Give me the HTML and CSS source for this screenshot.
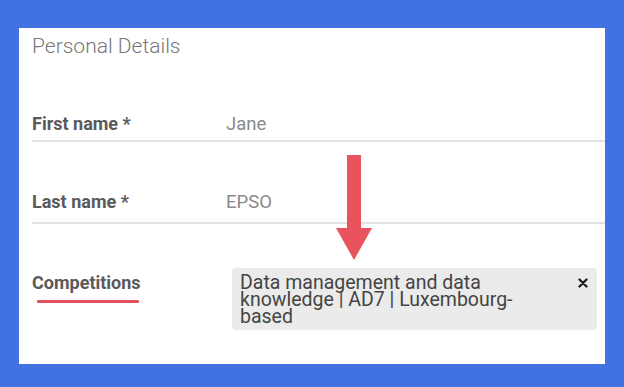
FILE: index.html
```html
<!DOCTYPE html>
<html lang="en">
<head>
<meta charset="utf-8">
<title>Personal Details</title>
<link rel="stylesheet" href="styles.css">
</head>
<body>
<main class="card">
  <h2 class="title">Personal Details</h2>
  <div class="row row-first">
    <div class="label">First name *</div>
    <div class="value">Jane</div>
  </div>
  <div class="row row-last">
    <div class="label">Last name *</div>
    <div class="value">EPSO</div>
  </div>
  <div class="row row-comp">
    <div class="label label-comp">
      <span>Competitions</span>
      <span class="underline"></span>
    </div>
    <div class="tag">
      <span class="tag-text">Data management and data knowledge | AD7 | Luxembourg-based</span>
      <svg class="tag-close" width="10" height="10" viewBox="0 0 10 10" aria-label="remove">
        <path d="M1.5 1.5 L8.5 8.5 M8.5 1.5 L1.5 8.5" stroke="#222" stroke-width="2.4" stroke-linecap="round"/>
      </svg>
    </div>
  </div>
  <svg class="arrow" width="36" height="105" viewBox="0 0 36 105">
    <polygon points="11,0 25,0 25,73 36,73 18,105 0,73 11,73" fill="#e9535d"/>
  </svg>
</main>
</body>
</html>
```

FILE: styles.css
```css
html, body {
  margin: 0;
  padding: 0;
}
body {
  background: #4272e2;
  width: 624px;
  height: 387px;
  overflow: hidden;
  padding-top: 28px;
  box-sizing: border-box;
  font-family: Roboto, "Liberation Sans", sans-serif;
}
.card {
  position: relative;
  margin-left: 19px;
  width: 586px;
  height: 336px;
  background: #ffffff;
  box-sizing: border-box;
  padding: 6px 0 0 13px;
}
.title {
  margin: 0;
  font-size: 21px;
  line-height: 24px;
  font-weight: 300;
  color: #777777;
}
.row {
  display: flex;
  align-items: flex-start;
  border-bottom: 2px solid #e3e3e3;
}
.row-first {
  padding-top: 55px;
  padding-bottom: 5px;
}
.row-last {
  padding-top: 49px;
  padding-bottom: 9px;
}
.row-comp {
  border-bottom: none;
  padding-top: 44px;
}
.label {
  width: 194px;
  flex: none;
  font-size: 18px;
  line-height: 22px;
  font-weight: 700;
  color: #5a5a5a;
}
.value {
  font-size: 18.5px;
  line-height: 22px;
  color: #8a8a8a;
}
.label-comp {
  width: 200px;
  padding-top: 4px;
  display: flex;
  flex-direction: column;
}
.underline {
  display: block;
  width: 102px;
  height: 3px;
  margin: 6px 0 0 5px;
  background: #e2515b;
  border-radius: 1px;
}
.tag {
  display: flex;
  align-items: flex-start;
  width: 365px;
  box-sizing: border-box;
  padding: 6px 9px 5px 8px;
  background: #ebebeb;
  border-radius: 4px;
}
.tag-text {
  flex: 1;
  font-size: 19.5px;
  line-height: 17px;
  color: #444444;
  padding-right: 40px;
}
.tag-close {
  flex: none;
  margin-top: 4px;
}
.arrow {
  position: absolute;
  left: 317px;
  top: 127px;
}
```
